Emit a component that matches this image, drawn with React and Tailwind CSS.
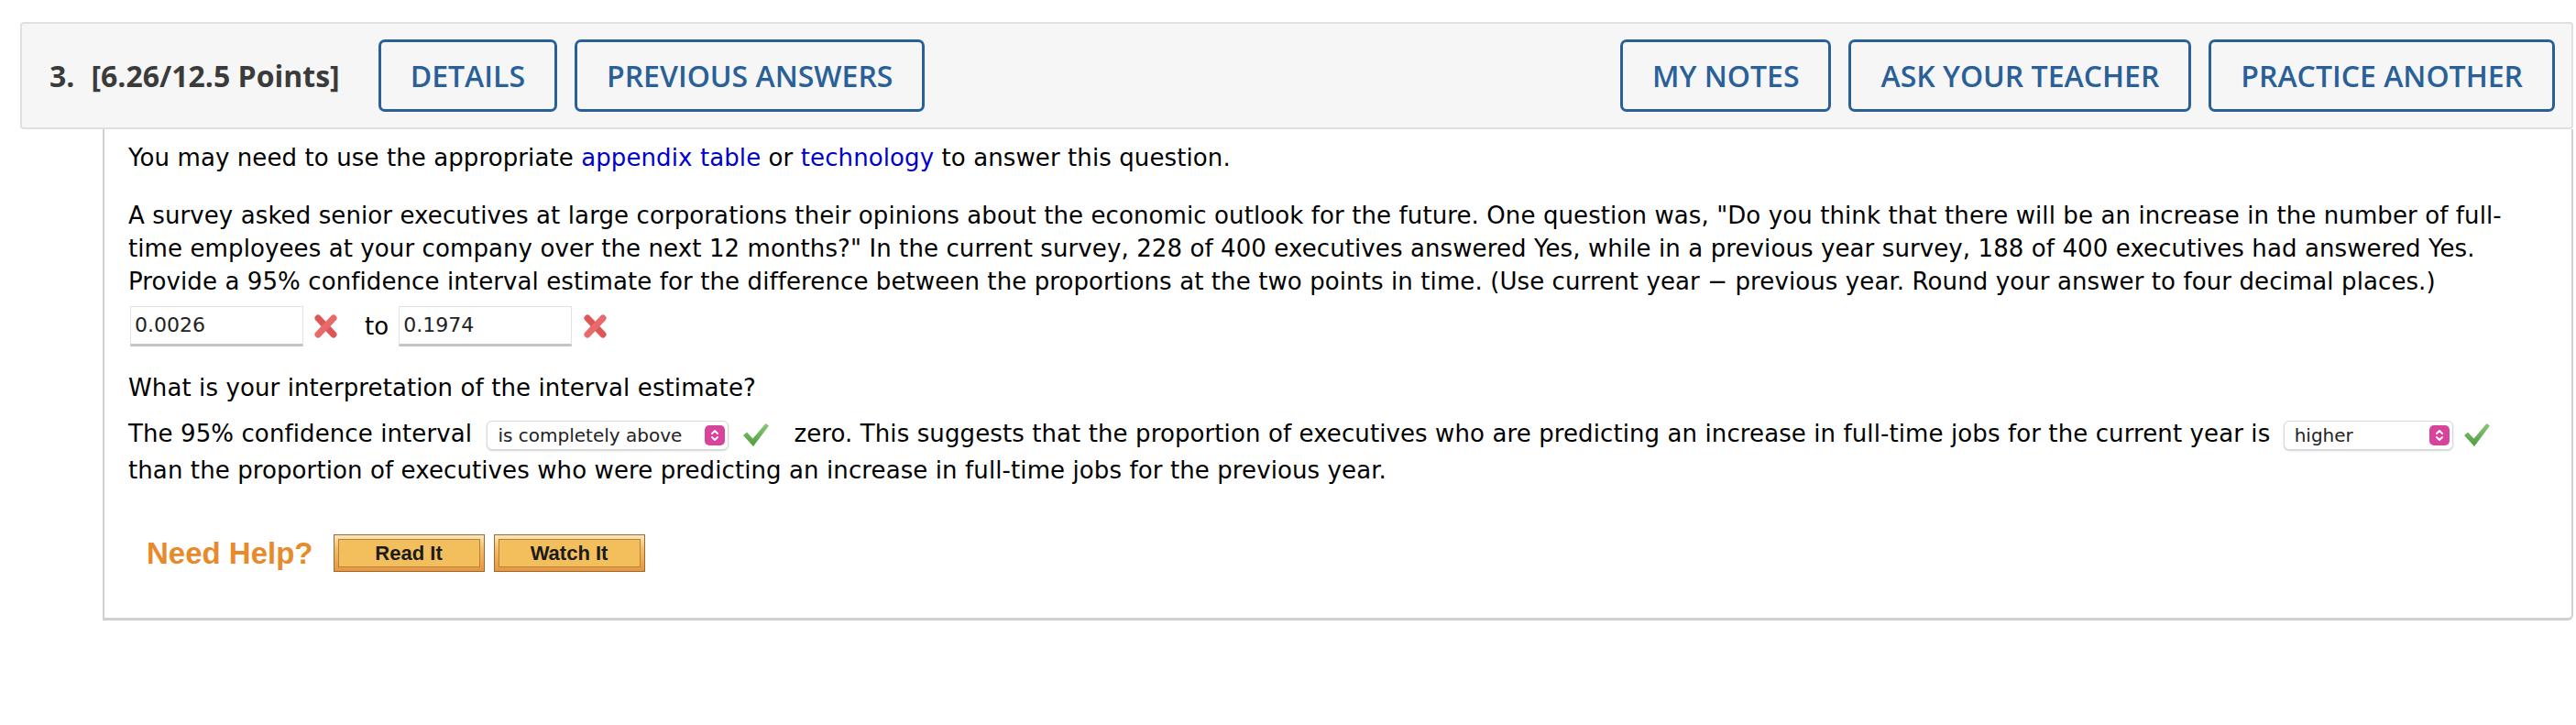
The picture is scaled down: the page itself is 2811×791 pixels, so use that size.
import React from "react";

const HeaderButton = ({ children }) => (
  <button className="h-[79px] px-[32px] border-[3px] border-[#2a6098] rounded-[7px] bg-transparent text-[32px] leading-none font-semibold text-[#2a6098]">
    {children}
  </button>
);

const Spinner = () => (
  <span className="flex h-[22px] w-[22px] items-center justify-center rounded-[5px] bg-[#d8449c]">
    <svg width="10" height="16" viewBox="0 0 10 16" fill="none">
      <path d="M2 6 L5 3 L8 6" stroke="white" strokeWidth="1.8" strokeLinecap="round" strokeLinejoin="round" />
      <path d="M2 10 L5 13 L8 10" stroke="white" strokeWidth="1.8" strokeLinecap="round" strokeLinejoin="round" />
    </svg>
  </span>
);

const Select = ({ label, width }) => (
  <span
    className={`inline-flex h-[32px] items-center justify-between rounded-[6px] border border-[#d8d8d8] bg-white pl-[11px] pr-[3px] align-middle text-[20px] leading-none tracking-normal text-[#222] shadow-[0_1px_2px_rgba(0,0,0,0.18)] ${width}`}
  >
    <span>{label}</span>
    <Spinner />
  </span>
);

const Check = () => (
  <svg width="30" height="27" viewBox="0 0 30 27" className="inline-block align-middle">
    <defs>
      <linearGradient id="chk" x1="0" y1="0" x2="0" y2="1">
        <stop offset="0" stopColor="#8cc97a" />
        <stop offset="1" stopColor="#4f9a3e" />
      </linearGradient>
    </defs>
    <polygon points="1,14 5,10.5 11.5,17.5 25.5,1 29,3.5 12,26" fill="url(#chk)" />
  </svg>
);

const Cross = () => (
  <svg width="29" height="28" viewBox="0 0 29 28" className="shrink-0">
    <path d="M6 5 L23 23" stroke="#e05555" strokeWidth="7" strokeLinecap="round" />
    <path d="M23 5 L6 23" stroke="#e86a6a" strokeWidth="7" strokeLinecap="round" />
  </svg>
);

const AnswerBox = ({ value }) => (
  <span className="flex h-[44px] w-[189px] items-center border border-[#e2e2e2] border-b-[3px] border-b-[#c4c4c4] bg-white pl-[4px] text-[22px] tracking-normal text-[#222]">
    {value}
  </span>
);

const HelpButton = ({ children }) => (
  <span className="flex h-[41px] w-[165px] flex-col border border-[#9b6b32] bg-[linear-gradient(#fde7bd,#f3c06a_35%,#e8963e)] p-[4px]">
    <span className="flex flex-1 items-center justify-center border border-[#b4823e] bg-[#f3bf5d] font-['Liberation_Sans',Arial,sans-serif] text-[22px] leading-none font-bold tracking-normal text-[#1b1b1b]">
      {children}
    </span>
  </span>
);

export default function App() {
  return (
    <div className="min-h-[791px] bg-white pt-[24px] pl-[22px] pr-[3px]">
      <div className="flex h-[117px] items-center justify-between rounded-[4px] border-2 border-[#e0e0e0] bg-[#f6f6f6] pl-[30px] pr-[18px] font-['Open_Sans',sans-serif]">
        <div className="flex items-center">
          <span className="text-[32px] font-bold text-[#3b3b3b]">3.</span>
          <span className="ml-[18px] text-[32px] font-bold text-[#3b3b3b]">[6.26/12.5 Points]</span>
          <div className="ml-[42px] flex gap-[19px]">
            <HeaderButton>DETAILS</HeaderButton>
            <HeaderButton>PREVIOUS ANSWERS</HeaderButton>
          </div>
        </div>
        <div className="flex gap-[19px]">
          <HeaderButton>MY NOTES</HeaderButton>
          <HeaderButton>ASK YOUR TEACHER</HeaderButton>
          <HeaderButton>PRACTICE ANOTHER</HeaderButton>
        </div>
      </div>

      <div className="ml-[90px] rounded-br-[6px] border-b-[3px] border-l-2 border-r-2 border-[#d0d0d0] pt-[13px] pb-[50px] pl-[26px] pr-[40px] font-['DejaVu_Sans',Verdana,sans-serif] text-[26px] leading-[36px] tracking-[0.1px] text-black">
        <p>
          You may need to use the appropriate <span className="text-[#0000cd]">appendix table</span> or{" "}
          <span className="text-[#0000cd]">technology</span> to answer this question.
        </p>

        <p className="mt-[27px]">
          A survey asked senior executives at large corporations their opinions about the economic outlook for the
          future. One question was, "Do you think that there will be an increase in the number of full-time employees
          at your company over the next 12 months?" In the current survey, 228 of 400 executives answered Yes, while in
          a previous year survey, 188 of 400 executives had answered Yes. Provide a 95% confidence interval estimate for
          the difference between the proportions at the two points in time. (Use current year &minus; previous year.
          Round your answer to four decimal places.)
        </p>

        <div className="mt-[9px] ml-[2px] flex items-center">
          <AnswerBox value="0.0026" />
          <span className="ml-[10px]">
            <Cross />
          </span>
          <span className="ml-[28px]">to</span>
          <span className="ml-[11px]">
            <AnswerBox value="0.1974" />
          </span>
          <span className="ml-[11px]">
            <Cross />
          </span>
        </div>

        <p className="mt-[27px]">What is your interpretation of the interval estimate?</p>

        <p className="mt-[12px] leading-[40px]">
          The 95% confidence interval <Select label="is completely above" width="w-[264px] ml-[8px]" />
          <span className="ml-[15px] mr-[26px]">
            <Check />
          </span>
          zero. This suggests that the proportion of executives who are predicting an increase in full-time jobs for
          the current year is <Select label="higher" width="w-[185px] ml-[6px]" />
          <span className="ml-[11px]">
            <Check />
          </span>{" "}
          than the proportion of executives who were predicting an increase in full-time jobs for the previous year.
        </p>

        <div className="mt-[50px] ml-[20px] flex items-center">
          <span className="font-['Liberation_Sans',Arial,sans-serif] text-[33px] font-bold leading-none tracking-normal text-[#e78a2c]">
            Need Help?
          </span>
          <span className="ml-[22px]">
            <HelpButton>Read It</HelpButton>
          </span>
          <span className="ml-[10px]">
            <HelpButton>Watch It</HelpButton>
          </span>
        </div>
      </div>
    </div>
  );
}
